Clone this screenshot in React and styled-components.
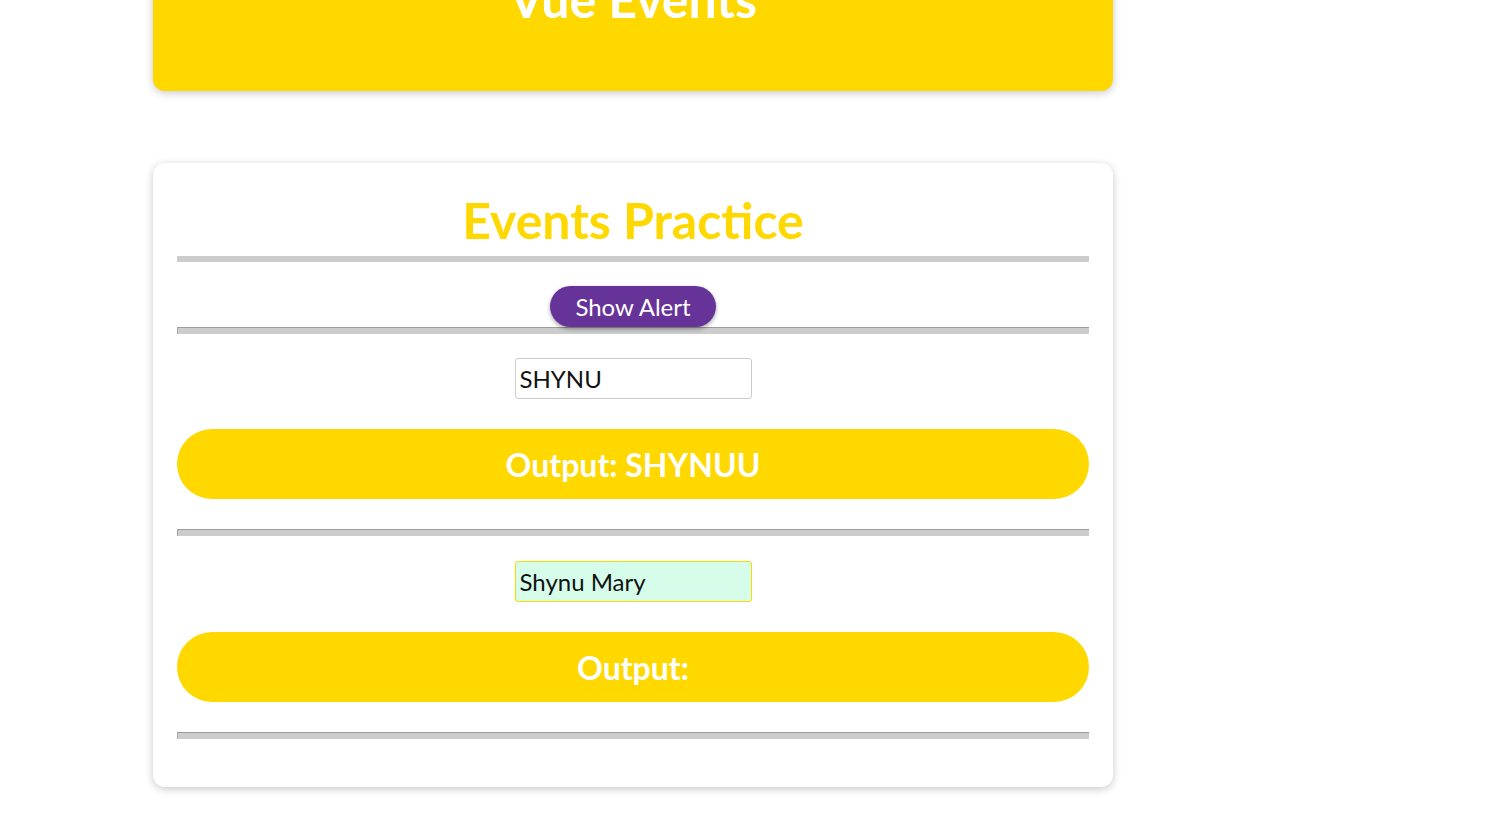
import React, { useState, useRef, useEffect } from 'react';
import styled, { createGlobalStyle } from 'styled-components';

const GlobalStyle = createGlobalStyle`
  body {
    margin: 0;
    background: #fff;
    font-family: Lato, "Open Sans", sans-serif;
  }
`;

const Page = styled.div`
  width: 960px;
  margin: -71px 0 0 153px;
  padding-bottom: 48px;
`;

const Card = styled.section`
  border-radius: 12px;
  box-shadow: 0 2px 8px rgba(0, 0, 0, 0.22);
  background: ${(p) => (p.$yellow ? '#ffd800' : '#fff')};
  padding: ${(p) => (p.$yellow ? '40px 24px 62px' : '27px 24px 48px')};
  margin-bottom: 72px;
  text-align: center;
`;

const Heading = styled.h1`
  margin: 0;
  font-size: 50px;
  line-height: 60px;
  font-weight: 700;
  color: #fff;
`;

const Title = styled.h2`
  margin: 0 0 6px;
  font-size: 50px;
  line-height: 60px;
  font-weight: 700;
  color: #ffd800;
`;

const Divider = styled.hr`
  margin: 0;
  height: ${(p) => (p.$flat ? '6px' : '7px')};
  border: none;
  border-top: ${(p) => (p.$flat ? 'none' : '1px solid #9c9c9c')};
  border-left: ${(p) => (p.$flat ? 'none' : '1px solid #a8a8a8')};
  background: #cccccc;
  box-sizing: border-box;
`;

const ButtonRow = styled.div`
  display: flex;
  justify-content: center;
  padding-top: 24px;
`;

const AlertButton = styled.button`
  font-family: Lato, "Open Sans", sans-serif;
  font-size: 24px;
  line-height: 29px;
  padding: 6px 25px;
  border: none;
  border-radius: 22px;
  background: #663399;
  color: #fff;
  box-shadow: 0 2px 4px rgba(0, 0, 0, 0.35);
  cursor: pointer;
`;

const Block = styled.div`
  display: flex;
  flex-direction: column;
  align-items: center;
  padding: ${(p) => (p.$first ? '24px' : '25px')} 0 30px;
`;

const TextInput = styled.input`
  width: 237px;
  height: 41px;
  box-sizing: border-box;
  padding: 0 4px;
  font-family: Lato, "Open Sans", sans-serif;
  font-size: 24px;
  color: #111;
  border: 1px solid ${(p) => (p.$active ? '#ffd800' : '#cccccc')};
  border-radius: 3px;
  background: ${(p) => (p.$active ? '#d5fdea' : '#fff')};
  outline: none;
  caret-color: #000;
`;

const Output = styled.div`
  align-self: stretch;
  margin-top: 30px;
  height: 70px;
  border-radius: 35px;
  background: #ffd800;
  color: #fff;
  font-size: 32px;
  font-weight: 700;
  display: flex;
  align-items: center;
  justify-content: center;
`;

export default function App() {
  const [lazyName, setLazyName] = useState('SHYNU');
  const [lazyOut, setLazyOut] = useState('SHYNUU');
  const [name, setName] = useState('Shynu Mary');
  const [out, setOut] = useState('');
  const second = useRef();

  useEffect(() => {
    const el = second.current;
    if (el) {
      el.focus();
      el.setSelectionRange(el.value.length, el.value.length);
    }
  }, []);

  return (
    <>
      <GlobalStyle />
      <Page>
        <Card $yellow>
          <Heading>Vue Events</Heading>
        </Card>
        <Card>
          <Title>Events Practice</Title>
          <Divider $flat />
          <ButtonRow>
            <AlertButton onClick={() => alert('Hello!')}>Show Alert</AlertButton>
          </ButtonRow>
          <Divider />
          <Block $first>
            <TextInput
              value={lazyName}
              onChange={(e) => setLazyName(e.target.value)}
              onBlur={() => setLazyOut(lazyName)}
            />
            <Output>Output: {lazyOut}</Output>
          </Block>
          <Divider />
          <Block>
            <TextInput
              $active
              ref={second}
              value={name}
              onChange={(e) => setName(e.target.value)}
              onKeyUp={(e) => e.key === 'Enter' && setOut(name)}
            />
            <Output>Output: {out}</Output>
          </Block>
          <Divider />
        </Card>
      </Page>
    </>
  );
}
